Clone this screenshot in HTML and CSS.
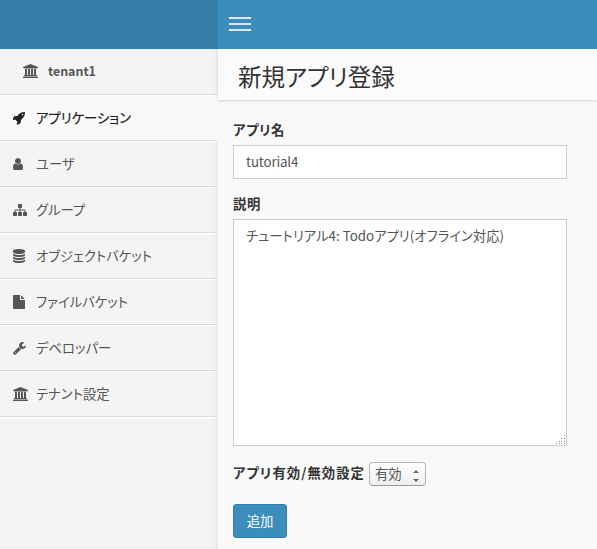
FILE: index.html
```html
<!DOCTYPE html>
<html lang="ja">
<head>
<meta charset="utf-8">
<title>新規アプリ登録</title>
<link rel="stylesheet" href="styles.css">
</head>
<body>
<svg class="defs" aria-hidden="true">
<symbol id="bank" viewBox="0 0 1920 1792"><path d="M960 0l960 384v128h-128q0 26-20.5 45t-48.5 19h-1526q-28 0-48.5-19t-20.5-45h-128v-128zm-704 640h256v768h128v-768h256v768h128v-768h256v768h128v-768h256v768h59q28 0 48.5 19t20.5 45v64h-1664v-64q0-26 20.5-45t48.5-19h59v-768zm1595 960q28 0 48.5 19t20.5 45v128h-1920v-128q0-26 20.5-45t48.5-19h1782z"/></symbol>
</svg>
<header class="header">
  <div class="brand"></div>
  <nav class="navbar"><div class="toggle"><span></span><span></span><span></span></div></nav>
</header>
<div class="wrapper">
  <aside class="sidebar">
    <div class="tenant"><svg class="icon wide"><use href="#bank"/></svg><b>tenant1</b></div>
    <ul class="menu">
      <li class="active"><svg class="icon" viewBox="128 0 1792 1792"><path d="M1440 448q0-40-28-68t-68-28-68 28-28 68 28 68 68 28 68-28 28-68zm224-288q0 249-75.5 430.5t-253.5 360.5q-81 80-195 176l-20 379q-2 16-16 26l-384 224q-7 4-16 4-12 0-23-9l-64-64q-13-14-8-32l85-276-281-281-276 85q-3 1-9 1-14 0-23-9l-64-64q-17-19-5-39l224-384q10-14 26-16l379-20q96-114 176-195 188-187 358-258t431-71q14 0 24 9.5t10 22.5z"/></svg><span>アプリケーション</span></li>
      <li><svg class="icon" viewBox="256 0 1792 1792"><path d="M1536 1399q0 109-62.5 187t-150.5 78h-854q-88 0-150.5-78t-62.5-187q0-85 8.5-160.5t31.5-152 58.5-131 94-89 134.5-34.5q131 128 313 128t313-128q76 0 134.5 34.5t94 89 58.5 131 31.5 152 8.5 160.5zm-256-887q0 159-112.5 271.5t-271.5 112.5-271.5-112.5-112.5-271.5 112.5-271.5 271.5-112.5 271.5 112.5 112.5 271.5z"/></svg><span>ユーザ</span></li>
      <li><svg class="icon" viewBox="0 0 1792 1792"><path d="M1792 1248v320q0 40-28 68t-68 28h-320q-40 0-68-28t-28-68v-320q0-40 28-68t68-28h96v-192h-512v192h96q40 0 68 28t28 68v320q0 40-28 68t-68 28h-320q-40 0-68-28t-28-68v-320q0-40 28-68t68-28h96v-192h-512v192h96q40 0 68 28t28 68v320q0 40-28 68t-68 28h-320q-40 0-68-28t-28-68v-320q0-40 28-68t68-28h96v-192q0-52 38-90t90-38h512v-192h-96q-40 0-68-28t-28-68v-320q0-40 28-68t68-28h320q40 0 68 28t28 68v320q0 40-28 68t-68 28h-96v192h512q52 0 90 38t38 90v192h96q40 0 68 28t28 68z"/></svg><span>グループ</span></li>
      <li><svg class="icon" viewBox="128 0 1792 1792"><path d="M896 768q237 0 443-43t325-127v170q0 69-103 128t-280 93.500-385 34.500-385-34.500-280-93.500-103-128v-170q119 84 325 127t443 43zm0 768q237 0 443-43t325-127v170q0 69-103 128t-280 93.500-385 34.500-385-34.500-280-93.500-103-128v-170q119 84 325 127t443 43zm0-384q237 0 443-43t325-127v170q0 69-103 128t-280 93.500-385 34.500-385-34.500-280-93.500-103-128v-170q119 84 325 127t443 43zm0-1152q208 0 385 34.500t280 93.500 103 128v128q0 69-103 128t-280 93.500-385 34.500-385-34.500-280-93.500-103-128v-128q0-69 103-128t280-93.500 385-34.500z"/></svg><span>オブジェクトバケット</span></li>
      <li><svg class="icon" viewBox="128 0 1792 1792"><path d="M1152 512v-472q22 14 36 28l408 408q14 14 28 36h-472zm-128 32q0 40 28 68t68 28h544v1056q0 40-28 68t-68 28h-1344q-40 0-68-28t-28-68v-1600q0-40 28-68t68-28h800v544z"/></svg><span>ファイルバケット</span></li>
      <li><svg class="icon" viewBox="64 0 1792 1792"><path d="M448 1472q0-26-19-45t-45-19-45 19-19 45 19 45 45 19 45-19 19-45zm644-420l-682 682q-37 37-90 37-52 0-91-37l-106-108q-38-36-38-90 0-53 38-91l681-681q39 98 114.500 173.500t173.500 114.500zm634-435q0 39-23 106-47 134-164.500 217.500t-258.500 83.500q-185 0-316.500-131.500t-131.500-316.500 131.500-316.500 316.500-131.500q58 0 121.500 16.500t107.500 46.500q16 11 16 28t-16 28l-293 169v224l193 107q5-3 79-48.500t135.500-81 70.500-35.500q15 0 23.500 10t8.500 25z"/></svg><span>デベロッパー</span></li>
      <li><svg class="icon wide"><use href="#bank"/></svg><span>テナント設定</span></li>
    </ul>
  </aside>
  <main class="content">
    <h1>新規アプリ登録</h1>
    <form class="form">
      <label class="label">アプリ名</label>
      <div class="control">tutorial4</div>
      <label class="label">説明</label>
      <div class="control area">チュートリアル4: Todoアプリ(オフライン対応)
        <svg class="grip" viewBox="0 0 10 10"><path d="M8 0h1v1H8zM5 3h1v1H5zM8 3h1v1H8zM3 6h1v1H3zM5 6h1v1H5zM8 6h1v1H8zM0 8h1v1H0zM3 8h1v1H3zM5 8h1v1H5zM8 8h1v1H8z"/></svg>
      </div>
      <div class="row">
        <label class="label">アプリ有効/無効設定</label>
        <div class="select"><span>有効</span><svg class="arrows" viewBox="0 0 6 12"><path d="M0 3L3 0l3 3zM0 9h6L3 12z"/></svg></div>
      </div>
      <button type="button" class="submit"><span>追加</span></button>
    </form>
  </main>
</div>
</body>
</html>
```
FILE: styles.css
```css
* { box-sizing: border-box; }
body {
  margin: 0;
  height: 549px;
  overflow: hidden;
  display: flex;
  flex-direction: column;
  background: #f9f9f9;
  color: #333;
  font: 13.35px/20px "Noto Sans CJK JP", sans-serif;
  font-feature-settings: "palt", "kern";
}
.defs { position: absolute; width: 0; height: 0; }
.header { display: flex; height: 49px; flex: none; }
.brand { width: 218px; background: #367fa9; }
.navbar { flex: 1; background: #3c8dbc; padding: 17px 11px; }
.toggle { width: 22px; display: flex; flex-direction: column; gap: 4px; }
.toggle span { height: 2px; background: #d8e8f2; }
.wrapper { display: flex; flex: 1; }
.sidebar {
  width: 218px;
  flex: none;
  background: #f4f4f4;
  box-shadow: inset -3px 0 8px -4px rgba(0, 0, 0, .12);
  color: #555;
}
.tenant {
  height: 46px;
  display: flex;
  align-items: center;
  padding: 0 0 1px 23px;
  gap: 10px;
  font-size: 12.4px;
  border-bottom: 1px solid #dbdbdb;
}
.menu { margin: 0; padding: 0; list-style: none; border-bottom: 1px solid #fff; }
.menu li {
  height: 46px;
  display: flex;
  align-items: center;
  padding-left: 13px;
  border-top: 1px solid #fff;
  border-bottom: 1px solid #dbdbdb;
  white-space: nowrap;
}
.menu span { padding-bottom: 1px; }
.menu .icon { margin-right: 9px; }
.menu .wide { margin-right: 8px; }
.menu .active { background: #f9f9f9; color: #222; }
.active span { -webkit-text-stroke: .2px #222; }
.icon { width: 14px; height: 14px; flex: none; fill: currentColor; }
.wide { width: 15px; }
.content { flex: 1; min-width: 0; }
h1 {
  margin: 0;
  height: 51px;
  padding: 13px 20px 0;
  font-size: 23.5px;
  line-height: 28px;
  font-weight: 400;
  background: #fbfbfb;
  box-shadow: 0 1px 2px rgba(0, 0, 0, .15);
}
.form { padding: 20px 30px 0 15px; }
.label { display: block; font-weight: 700; margin-bottom: 5px; letter-spacing: .6px; }
.control {
  height: 34px;
  padding: 6px 12px;
  margin-bottom: 15px;
  border: 1px solid #ccc;
  background: #fff;
  color: #555;
}
.control:not(.area) { letter-spacing: -.15px; }
.area { height: 227px; position: relative; white-space: nowrap; }
.grip { position: absolute; right: 0; bottom: 0; width: 10px; height: 10px; fill: #888; shape-rendering: crispEdges; }
.row { display: flex; align-items: center; height: 26px; margin-top: 15px; }
.row .label { width: 136px; margin: 0; padding-bottom: 2px; letter-spacing: 1.05px; white-space: nowrap; }
.select {
  width: 57px;
  height: 24px;
  padding: 0 6px 0 5px;
  display: flex;
  align-items: center;
  justify-content: space-between;
  border: 1px solid #b5b5b5;
  border-bottom-color: #999;
  border-radius: 4px;
  background: linear-gradient(#fff, #eee);
  color: #555;
}
.select span { padding-bottom: 1px; }
.arrows { width: 6px; height: 12px; margin-top: 3px; fill: #666; }
.submit {
  display: block;
  width: 54px;
  height: 34px;
  margin-top: 17px;
  padding: 0 0 1px;
  border: 1px solid #367fa9;
  border-radius: 3px;
  background: #3c8dbc;
  color: #fff;
  font: inherit;
}
```
